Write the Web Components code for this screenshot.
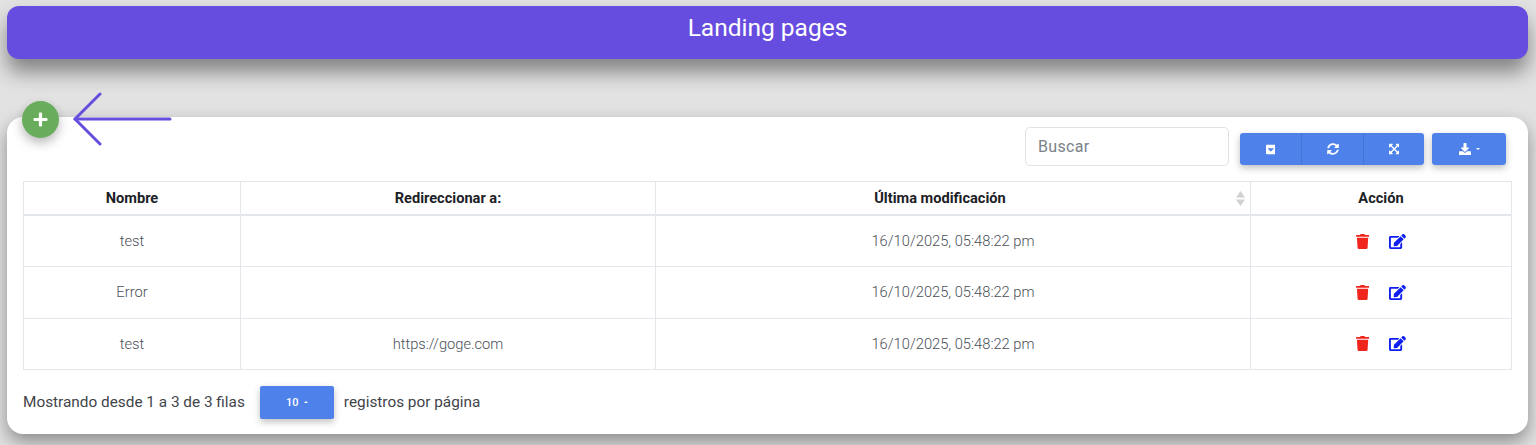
<!DOCTYPE html>
<html lang="es">
<head>
<meta charset="utf-8">
<title>Landing pages</title>
<style>
    html, body { margin: 0; height: 445px; overflow: hidden; }
    body {
        background: #e2e2e2;
        font-family: Roboto, "Liberation Sans", sans-serif;
        padding: 6px 8px 0 7px;
        box-sizing: border-box;
    }
</style>
</head>
<body>
<app-header>Landing pages</app-header>
<landing-card>
    <add-button slot="overlay"></add-button>
    <hint-arrow slot="overlay"></hint-arrow>
    <table-toolbar></table-toolbar>
    <landing-table></landing-table>
    <table-footer></table-footer>
</landing-card>

<script>
const ICONS = {
    card: ['0 0 448 512', 'M448 80v352c0 26.5-21.5 48-48 48H48c-26.5 0-48-21.5-48-48V80c0-26.5 21.5-48 48-48h352c26.5 0 48 21.5 48 48zM92.5 220.5l123 123c4.7 4.7 12.3 4.7 17 0l123-123c7.6-7.6 2.2-20.5-8.5-20.5H101c-10.7 0-16.1 12.9-8.5 20.5z'],
    sync: ['0 0 512 512', 'M370.72 133.28C339.458 104.008 298.888 87.962 255.848 88c-77.458.068-144.328 53.178-162.791 126.85-1.344 5.363-6.122 9.15-11.651 9.15H24.103c-7.498 0-13.194-6.807-11.807-14.176C33.933 94.924 134.813 8 256 8c66.448 0 126.791 26.136 171.315 68.685L463.03 40.97C478.149 25.851 504 36.559 504 57.941V192c0 13.255-10.745 24-24 24H345.941c-21.382 0-32.09-25.851-16.971-40.971l41.75-41.749zM32 296h134.059c21.382 0 32.09 25.851 16.971 40.971l-41.75 41.75c31.262 29.273 71.835 45.319 114.876 45.28 77.418-.07 144.315-53.144 162.787-126.849 1.344-5.363 6.122-9.15 11.651-9.15h57.304c7.498 0 13.194 6.807 11.807 14.176C478.067 417.076 377.187 504 256 504c-66.448 0-126.791-26.136-171.315-68.685L48.97 471.03C33.851 486.149 8 475.441 8 454.059V320c0-13.255 10.745-24 24-24z'],
    expand: ['0 0 448 512', 'M448 344v112a23.94 23.94 0 0 1-24 24H312c-21.39 0-32.09-25.9-17-41l36.2-36.2L224 295.6 116.77 402.9 153 439c15.09 15.1 4.39 41-17 41H24a23.94 23.94 0 0 1-24-24V344c0-21.4 25.89-32.1 41-17l36.19 36.2L184.46 256 77.18 148.7 41 185c-15.1 15.1-41 4.4-41-17V56a23.94 23.94 0 0 1 24-24h112c21.39 0 32.09 25.9 17 41l-36.2 36.2L224 216.4l107.23-107.3L295 73c-15.09-15.1-4.39-41 17-41h112a23.94 23.94 0 0 1 24 24v112c0 21.4-25.89 32.1-41 17l-36.19-36.2L263.54 256l107.28 107.3L407 327.1c15.1-15.2 41-4.5 41 16.9z'],
    download: ['0 0 512 512', 'M216 0h80c13.3 0 24 10.7 24 24v168h87.7c17.8 0 26.7 21.5 14.1 34.1L269.7 378.3c-7.5 7.5-19.8 7.5-27.3 0L90.1 226.1c-12.6-12.6-3.7-34.1 14.1-34.1H192V24c0-13.3 10.7-24 24-24zm296 376v112c0 13.3-10.7 24-24 24H24c-13.3 0-24-10.7-24-24V376c0-13.3 10.7-24 24-24h146.7l49 49c20.1 20.1 52.5 20.1 72.6 0l49-49H488c13.3 0 24 10.7 24 24z'],
    trash: ['0 0 448 512', 'M432 32H312l-9.4-18.7A24 24 0 0 0 281.1 0H166.8a23.72 23.72 0 0 0-21.4 13.3L136 32H16A16 16 0 0 0 0 48v32a16 16 0 0 0 16 16h416a16 16 0 0 0 16-16V48a16 16 0 0 0-16-16zM53.2 467a48 48 0 0 0 47.9 45h245.8a48 48 0 0 0 47.9-45L416 128H32z'],
    edit: ['0 0 576 512', 'M402.6 83.2l90.2 90.2c3.8 3.8 3.8 10 0 13.8L274.4 405.6l-92.8 10.3c-12.4 1.4-22.9-9.1-21.5-21.5l10.3-92.8L388.8 83.2c3.8-3.8 10-3.8 13.8 0zm162-22.9l-48.8-48.8c-15.2-15.2-39.9-15.2-55.2 0l-35.4 35.4c-3.8 3.8-3.8 10 0 13.8l90.2 90.2c3.8 3.8 10 3.8 13.8 0l35.4-35.4c15.2-15.3 15.2-40 0-55.2zM384 346.2V448H64V128h229.8c3.2 0 6.2-1.3 8.5-3.5l40-40c7.6-7.6 2.2-20.5-8.5-20.5H48C21.5 64 0 85.5 0 112v352c0 26.5 21.5 48 48 48h352c26.5 0 48-21.5 48-48V306.2c0-10.7-12.9-16-20.5-8.5l-40 40c-2.2 2.3-3.5 5.3-3.5 8.5z']
};

function icon(name, size, color) {
    const [box, d] = ICONS[name];
    return `<svg viewBox="${box}" height="${size}" fill="${color}" style="display:block"><path d="${d}"/></svg>`;
}

class AppHeader extends HTMLElement {
    constructor() {
        super();
        this.attachShadow({ mode: 'open' }).innerHTML = `
        <style>
            :host {
                display: flex;
                justify-content: center;
                box-sizing: border-box;
                height: 53px;
                padding-top: 7px;
                background: #674ce0;
                color: #fff;
                border-radius: 12px;
                font-size: 24.5px;
                line-height: 30px;
                box-shadow: 0 13px 20px rgba(0, 0, 0, .42);
            }
        </style>
        <slot></slot>`;
    }
}

class LandingCard extends HTMLElement {
    constructor() {
        super();
        this.attachShadow({ mode: 'open' }).innerHTML = `
        <style>
            :host {
                display: block;
                position: relative;
                box-sizing: border-box;
                height: 317px;
                margin-top: 58px;
                padding: 10px 16px 0;
                background: #fff;
                border-radius: 16px;
                box-shadow: 0 8px 18px rgba(0, 0, 0, .38);
            }
        </style>
        <slot name="overlay"></slot>
        <slot></slot>`;
    }
}

class AddButton extends HTMLElement {
    constructor() {
        super();
        this.attachShadow({ mode: 'open' }).innerHTML = `
        <style>
            :host {
                position: absolute;
                left: 15px;
                top: -16px;
                width: 37px;
                height: 37px;
                display: flex;
                align-items: center;
                justify-content: center;
                border-radius: 50%;
                background: #68ad5b;
                box-shadow: 0 5px 11px rgba(0, 0, 0, .28);
            }
        </style>
        <svg width="15" height="15" viewBox="0 0 15 15" fill="#fff">
            <rect x="5.9" y="0.5" width="3.2" height="14" rx="1"/>
            <rect x="0.5" y="5.9" width="14" height="3.2" rx="1"/>
        </svg>`;
    }
}

class HintArrow extends HTMLElement {
    constructor() {
        super();
        this.attachShadow({ mode: 'open' }).innerHTML = `
        <style>
            :host { position: absolute; left: 65px; top: -25px; width: 102px; height: 54px; display: block; }
            svg { display: block; }
        </style>
        <svg width="102" height="54" viewBox="0 0 102 54" fill="none" stroke="#674ce0" stroke-width="3" stroke-linecap="round" stroke-linejoin="round">
            <path d="M98 27H3"/>
            <path d="M28 2L3 27l25 25"/>
        </svg>`;
    }
}

class TableToolbar extends HTMLElement {
    constructor() {
        super();
        const button = (name, size) => `<button class="btn">${icon(name, size, '#fff')}</button>`;
        this.attachShadow({ mode: 'open' }).innerHTML = `
        <style>
            :host {
                display: flex;
                justify-content: flex-end;
                align-items: flex-start;
                height: 54px;
                padding-right: 6px;
            }
            .search {
                box-sizing: border-box;
                width: 204px;
                height: 39px;
                margin-right: 11px;
                padding: 0 12px;
                border: 1px solid #dfe2e6;
                border-radius: 5px;
                font: 16px Roboto, "Liberation Sans", sans-serif;
                letter-spacing: .3px;
                color: #495057;
                outline: none;
            }
            .search::placeholder { color: #7b8289; opacity: 1; }
            .group { display: flex; margin-top: 6px; border-radius: 3px; box-shadow: 0 3px 7px rgba(0, 0, 0, .25); }
            .group + .group { margin-left: 8px; }
            .btn {
                box-sizing: border-box;
                height: 32px;
                width: 61.33px;
                display: flex;
                align-items: center;
                justify-content: center;
                gap: 5px;
                padding: 0;
                border: 0;
                background: #4f81eb;
            }
            .btn + .btn { border-left: 1px solid #4873d6; }
            .group .btn:first-child { border-radius: 3px 0 0 3px; }
            .group .btn:last-child { border-radius: 0 3px 3px 0; }
            .wide { width: 74px; border-radius: 3px !important; }
            .caret { width: 0; height: 0; border: 2.5px solid transparent; border-top: 2.5px solid #fff; border-bottom: 0; }
        </style>
        <input class="search" type="text" placeholder="Buscar">
        <div class="group">
            ${button('card', 11)}
            ${button('sync', 12)}
            ${button('expand', 12)}
        </div>
        <div class="group">
            <button class="btn wide">${icon('download', 12, '#fff')}<span class="caret"></span></button>
        </div>`;
    }
}

class LandingTable extends HTMLElement {
    constructor() {
        super();
        const rows = [
            ['test', ''],
            ['Error', ''],
            ['test', 'https://goge.com']
        ];
        const date = '16/10/2025, 05:48:22 pm';
        const body = rows.map(([name, url]) => `
            <tr>
                <td>${name}</td>
                <td>${url}</td>
                <td>${date}</td>
                <td><div class="actions">${icon('trash', 15, '#f0251c')}${icon('edit', 15, '#0f1ff2')}</div></td>
            </tr>`).join('');
        this.attachShadow({ mode: 'open' }).innerHTML = `
        <style>
            :host { display: block; }
            table {
                width: 1488px;
                table-layout: fixed;
                border-collapse: collapse;
                font-size: 14.7px;
                font-weight: 300;
                color: #4a5057;
            }
            th, td { border: 1px solid #e3e6ea; text-align: center; padding: 0; }
            th { position: relative; height: 32px; font-size: 14.6px; font-weight: 700; color: #1c2126; border-bottom-width: 2px; }
            td { height: 50.3px; }
            .actions { display: flex; justify-content: center; align-items: center; gap: 20px; }
            .with-sort { padding-right: 26px; }
            .sort { position: absolute; right: 5px; top: 9px; display: block; }
        </style>
        <table>
            <colgroup>
                <col style="width:217px"><col style="width:415px"><col style="width:595px"><col style="width:261px">
            </colgroup>
            <thead>
                <tr>
                    <th>Nombre</th>
                    <th>Redireccionar a:</th>
                    <th class="with-sort">Última modificación
                        <svg class="sort" width="9" height="15" viewBox="0 0 9 15" fill="#cfd1d4"><path d="M4.5 0L9 6.5H0zM4.5 15L0 8.5h9z"/></svg>
                    </th>
                    <th>Acción</th>
                </tr>
            </thead>
            <tbody>${body}</tbody>
        </table>`;
    }
}

class TableFooter extends HTMLElement {
    constructor() {
        super();
        this.attachShadow({ mode: 'open' }).innerHTML = `
        <style>
            :host {
                display: flex;
                align-items: center;
                height: 33px;
                margin-top: 16px;
                font-size: 15.35px;
                color: #3f444a;
            }
            .size {
                box-sizing: border-box;
                width: 74px;
                height: 33px;
                margin: 0 10px 0 15px;
                display: flex;
                align-items: center;
                justify-content: center;
                gap: 5px;
                background: #4f81eb;
                color: #fff;
                font-size: 11px;
                font-weight: 500;
                border-radius: 2px;
                box-shadow: 0 3px 7px rgba(0, 0, 0, .25);
            }
            .caret { width: 0; height: 0; border: 2.5px solid transparent; border-bottom: 2.5px solid #fff; border-top: 0; }
        </style>
        <span>Mostrando desde 1 a 3 de 3 filas</span>
        <div class="size">10<span class="caret"></span></div>
        <span>registros por página</span>`;
    }
}

customElements.define('app-header', AppHeader);
customElements.define('landing-card', LandingCard);
customElements.define('add-button', AddButton);
customElements.define('hint-arrow', HintArrow);
customElements.define('table-toolbar', TableToolbar);
customElements.define('landing-table', LandingTable);
customElements.define('table-footer', TableFooter);
</script>
</body>
</html>
